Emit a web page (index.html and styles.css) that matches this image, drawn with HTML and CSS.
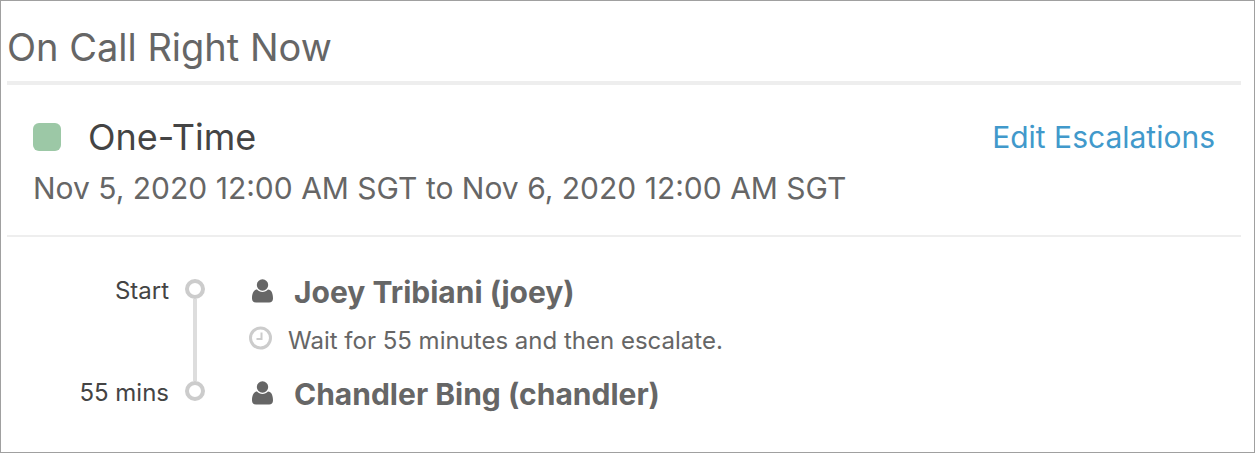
FILE: index.html
```
<!DOCTYPE html>
<html lang="en">
<head>
  <meta charset="UTF-8" />
  <meta name="viewport" content="width=device-width, initial-scale=1" />
  <title>On Call Right Now</title>
  <link rel="stylesheet" href="styles.css">
</head>
<body>

  <main class="on-call">
    <h1>On Call Right Now</h1>

    <section class="schedule">
      <div class="schedule-header">
        <span class="schedule-color"></span>
        <h2>One-Time</h2>
        <a class="edit-link" href="#">Edit Escalations</a>
      </div>
      <p class="schedule-dates">Nov 5, 2020 12:00 AM SGT to Nov 6, 2020 12:00 AM SGT</p>
    </section>

    <!-- Escalation steps -->
    <ol class="steps">
      <li class="step">
        <span class="step-time">Start</span>
        <span class="step-marker"></span>
        <div class="step-body">
          <div class="person">
            <svg class="icon-user" viewBox="0 0 22 24" aria-hidden="true">
              <circle cx="10.5" cy="6" r="5.7" />
              <path d="M5 10.6C1.6 10.6 0 14.6 0 19.4C0 22 1.6 23.4 3.8 23.4H17.2C19.4 23.4 21 22 21 19.4C21 14.6 19.4 10.6 16 10.6C14.6 12.1 12.7 13 10.5 13S6.4 12.1 5 10.6Z" />
            </svg>
            <span>Joey Tribiani (joey)</span>
          </div>
          <div class="wait">
            <svg class="icon-clock" viewBox="0 0 24 24" aria-hidden="true">
              <circle cx="11.5" cy="12" r="10" stroke-width="3" />
              <path d="M12.5 6.5V13H7.5" stroke-width="2" />
            </svg>
            <span>Wait for 55 minutes and then escalate.</span>
          </div>
        </div>
      </li>
      <li class="step">
        <span class="step-time">55 mins</span>
        <span class="step-marker"></span>
        <div class="step-body">
          <div class="person">
            <svg class="icon-user" viewBox="0 0 22 24" aria-hidden="true">
              <circle cx="10.5" cy="6" r="5.7" />
              <path d="M5 10.6C1.6 10.6 0 14.6 0 19.4C0 22 1.6 23.4 3.8 23.4H17.2C19.4 23.4 21 22 21 19.4C21 14.6 19.4 10.6 16 10.6C14.6 12.1 12.7 13 10.5 13S6.4 12.1 5 10.6Z" />
            </svg>
            <span>Chandler Bing (chandler)</span>
          </div>
        </div>
      </li>
    </ol>
  </main>

</body>
</html>
```
FILE: styles.css
```
*,
*::before,
*::after {
  box-sizing: border-box;
  margin: 0;
  padding: 0;
}

body {
  font-family: Inter, "Open Sans", sans-serif;
  color: #666;
  background: #fff;
}

.on-call {
  min-height: 100vh;
  padding: 24px 13px 24px 6px;
  border: 1px solid #a0a0a0;
}

h1 {
  padding-bottom: 12px;
  border-bottom: 4px solid #eee;
  font-size: 38px;
  font-weight: 400;
  line-height: 44px;
}

/* Schedule */
.schedule {
  padding: 30px 26px;
  border-bottom: 2px solid #eee;
}

.schedule-header {
  display: flex;
  align-items: center;
}

.schedule-color {
  width: 28px;
  height: 28px;
  margin-right: 27px;
  border-radius: 6px;
  background: #9cc8a6;
}

h2 {
  color: #444;
  font-size: 36px;
  font-weight: 400;
  line-height: 44px;
}

.edit-link {
  margin-left: auto;
  color: #4199cb;
  font-size: 30px;
  text-decoration: none;
}

.edit-link:hover {
  text-decoration: underline;
}

.schedule-dates {
  margin-top: 12px;
  font-size: 30px;
  line-height: 34px;
}

/* Steps */
.steps {
  padding-top: 42px;
  list-style: none;
}

.step {
  display: grid;
  grid-template-columns: 162px 20px 1fr;
  column-gap: 16px;
}

.step-time {
  color: #444;
  font-size: 24px;
  line-height: 24px;
  text-align: right;
}

.step-marker {
  display: flex;
  flex-direction: column;
  align-items: center;
}

.step-marker::before {
  content: "";
  width: 20px;
  height: 20px;
  border: 4px solid #ccc;
  border-radius: 50%;
}

.step:not(:last-child) .step-marker::after {
  content: "";
  flex: 1;
  width: 4px;
  background: #ddd;
}

.step-body {
  padding-left: 28px;
}

.step:not(:last-child) .step-body {
  padding-bottom: 25px;
}

.person,
.wait {
  display: flex;
  align-items: flex-start;
}

.person {
  padding-left: 3px;
  gap: 20px;
  font-size: 30px;
  font-weight: 700;
  line-height: 26px;
}

.wait {
  margin-top: 21px;
  gap: 15px;
  font-size: 24px;
  line-height: 30px;
}

.icon-user {
  width: 22px;
  height: 24px;
  fill: #666;
}

.icon-clock {
  width: 24px;
  height: 24px;
  fill: none;
  stroke: #ccc;
}
```
